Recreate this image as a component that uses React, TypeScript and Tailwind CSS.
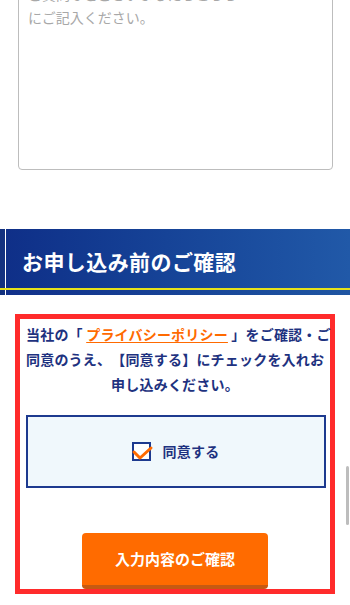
import React, { useState } from 'react';

export default function App() {
  const [agreed, setAgreed] = useState(true);

  return (
    <div className="relative h-[605px] overflow-hidden bg-white font-['Noto_Sans_CJK_JP','Noto_Sans',sans-serif] [text-spacing-trim:space-all]">
      {/* お問い合わせ内容 */}
      <div className="-mt-[26px] pl-[18px] pr-[17px]">
        <textarea
          className="block h-[196px] w-full resize-none rounded-[4px] border border-[#bdbdbd] bg-white px-[9px] py-[8px] text-[14px] leading-[23px] text-[#333] outline-none placeholder:text-[#a8a8a8]"
          placeholder={'ご質問などございましたらこちら\nにご記入ください。'}
        />
      </div>

      {/* 見出し */}
      <div className="mt-[59px]">
        <div className="flex h-[59px]">
          <div className="w-[5px] bg-[#13317f]" />
          <div className="w-px bg-white/80" />
          <div className="flex flex-1 items-center bg-gradient-to-r from-[#0f2f88] to-[#2159a8] pl-[16px] pt-[6px]">
            <h2 className="text-[21px] font-bold tracking-[0.02em] text-white">お申し込み前のご確認</h2>
          </div>
        </div>
        <div className="h-[2px] bg-[#e6e21a]" />
        <div className="flex h-[5px]">
          <div className="w-[5px] bg-[#13317f]" />
          <div className="w-px bg-white/80" />
          <div className="flex-1 bg-gradient-to-r from-[#12308a] to-[#1f55a2]" />
        </div>
      </div>

      {/* 同意 */}
      <div className="mx-[15px] mt-[19px] h-[280px] border-[5px] border-[#ff2b2b] px-[6px] pt-[3px]">
        <p className="whitespace-nowrap text-center text-[14px] font-bold leading-[25px] tracking-[0.2px] text-[#1e3280]">
          当社の「 <a href="#" className="text-[#ff6a00] underline underline-offset-2">プライバシーポリシー</a> 」をご確認・ご
          <br />
          同意のうえ、【同意する】にチェックを入れお
          <br />
          申し込みください。
        </p>

        <button
          type="button"
          onClick={() => setAgreed(!agreed)}
          className="mt-[18px] flex h-[73px] w-[300px] items-center justify-center gap-[10px] border-2 border-[#1d3a8f] bg-[#f0f8fc]"
        >
          <svg width="20" height="20" viewBox="0 0 20 20" className="overflow-visible">
            <rect x="1" y="1" width="17" height="17" fill="#fff" stroke="#1d3a8f" strokeWidth="2" />
            {agreed && (
              <path d="M2 10 L8 16 L19 6" fill="none" stroke="#ff6a00" strokeWidth="3" strokeLinecap="round" strokeLinejoin="round" />
            )}
          </svg>
          <span className="text-[14px] font-bold tracking-[0.3px] text-[#1e3280]">同意する</span>
        </button>

        <div className="mt-[45px] flex justify-center">
          <button
            type="button"
            className="h-[56px] w-[186px] rounded-[4px] border-b-4 border-[#c65a12] bg-[#ff6b00] text-[15px] font-bold text-white"
          >
            入力内容のご確認
          </button>
        </div>
      </div>

      {/* スクロールバー */}
      <div className="absolute right-[1px] top-[466px] h-[59px] w-[3px] rounded-full bg-[#bdbdbd]" />
    </div>
  );
}
